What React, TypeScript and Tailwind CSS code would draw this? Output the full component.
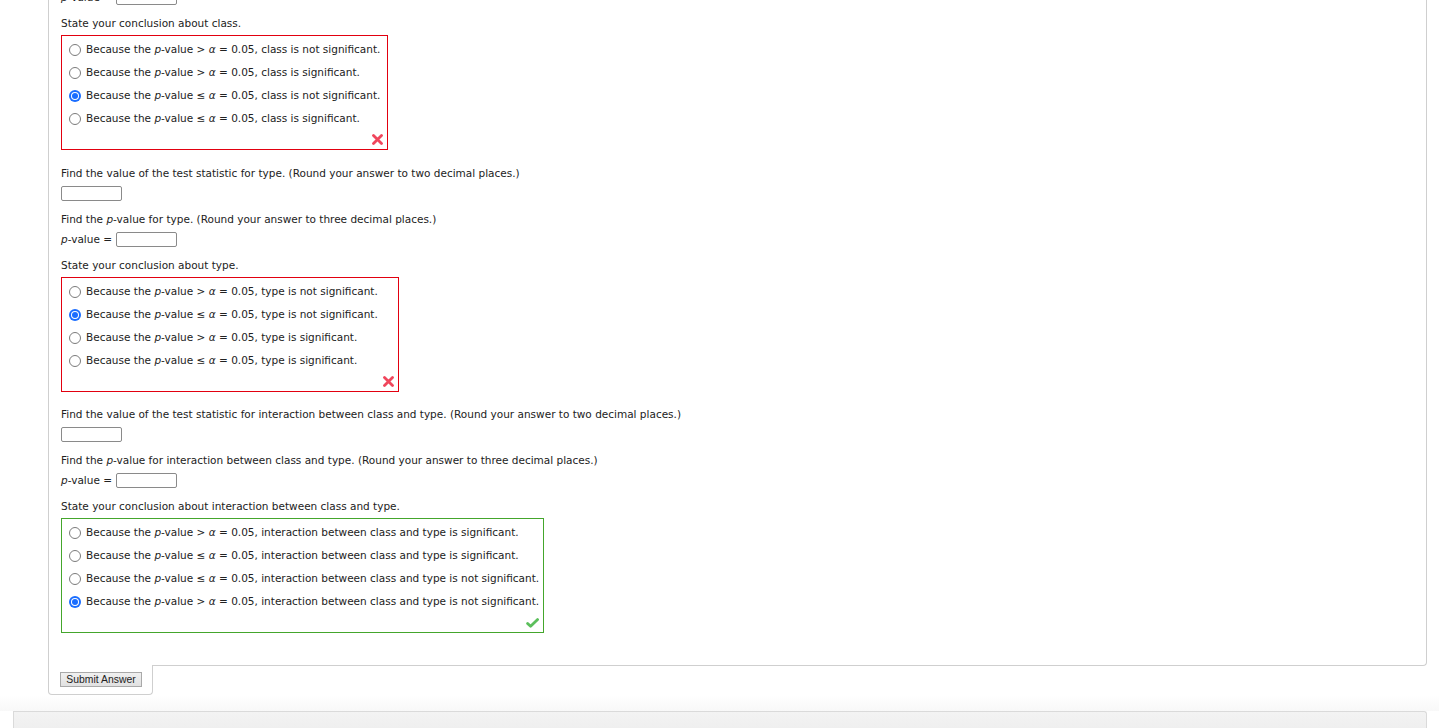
import type { ReactElement, ReactNode } from "react";

const FONT = { fontFamily: '"DejaVu Sans", Verdana, sans-serif' };

type Op = ">" | "≤";

interface Choice {
  readonly op: Op;
  readonly rest: string;
  readonly checked?: boolean;
}

function TextInput({ className = "" }: { className?: string }): ReactElement {
  return (
    <input
      type="text"
      aria-label="answer"
      className={`block w-[61px] h-[15px] border border-[#8a8a8a] rounded-[2px] bg-white ${className}`}
    />
  );
}

function PValueRow({ className = "" }: { className?: string }): ReactElement {
  return (
    <div className={`flex items-center h-[15px] ${className}`}>
      <span>
        <i>p</i>-value =
      </span>
      <TextInput className="ml-[4px]" />
    </div>
  );
}

function RedX(): ReactElement {
  return (
    <svg width="11" height="11" viewBox="0 0 11 11" aria-hidden="true">
      <path d="M1.5 1.5 L9.5 9.5 M9.5 1.5 L1.5 9.5" stroke="#f0465c" strokeWidth="2.8" strokeLinecap="round" />
    </svg>
  );
}

function GreenCheck(): ReactElement {
  return (
    <svg width="13" height="10" viewBox="0 0 13 10" aria-hidden="true">
      <path d="M1.6 5.4 L4.6 8.3 L11.6 1.6" stroke="#5cbf5c" strokeWidth="2.8" fill="none" strokeLinecap="round" strokeLinejoin="round" />
    </svg>
  );
}

function Radio({ name, checked }: { name: string; checked?: boolean }): ReactElement {
  if (checked) {
    return (
      <span className="flex items-center justify-center w-[12px] h-[12px] shrink-0 rounded-full bg-[#1a6dff]">
        <input type="radio" name={name} defaultChecked className="sr-only" />
        <span className="flex items-center justify-center w-[8px] h-[8px] rounded-full bg-white">
          <span className="w-[6px] h-[6px] rounded-full bg-[#1a6dff]" />
        </span>
      </span>
    );
  }
  return (
    <span className="block w-[12px] h-[12px] shrink-0 rounded-full border border-[#7b7b7b] bg-white">
      <input type="radio" name={name} className="sr-only" />
    </span>
  );
}

function ChoiceBox({
  name,
  choices,
  correct,
  width,
}: {
  name: string;
  choices: readonly Choice[];
  correct: boolean;
  width: string;
}): ReactElement {
  return (
    <div
      className={`${width} border pl-[7px] pr-[4px] pt-[2px] mt-[5px] ${
        correct ? "border-[#44a62c]" : "border-[#e2000f]"
      }`}
    >
      {choices.map((c, i) => (
        <label key={i} className="flex items-center h-[23px] whitespace-nowrap">
          <Radio name={name} checked={c.checked} />
          <span className="ml-[5px]">
            Because the <i>p</i>-value {c.op} <i>α</i> = 0.05, {c.rest}
          </span>
        </label>
      ))}
      <div className="flex justify-end items-center h-[19px]">
        {correct ? <GreenCheck /> : <RedX />}
      </div>
    </div>
  );
}

function Line({ children, className = "" }: { children: ReactNode; className?: string }): ReactElement {
  return <p className={`leading-[14px] ${className}`}>{children}</p>;
}

function Block({
  factor,
  name,
  choices,
  correct,
  width,
  className = "",
}: {
  factor: string;
  name: string;
  choices: readonly Choice[];
  correct: boolean;
  width: string;
  className?: string;
}): ReactElement {
  return (
    <div className={className}>
      <Line>
        Find the value of the test statistic for {factor}. (Round your answer to two decimal places.)
      </Line>
      <TextInput className="mt-[6px]" />
      <Line className="mt-[11px]">
        Find the <i>p</i>-value for {factor}. (Round your answer to three decimal places.)
      </Line>
      <PValueRow className="mt-[6px]" />
      <Line className="mt-[11px]">State your conclusion about {factor}.</Line>
      <ChoiceBox name={name} choices={choices} correct={correct} width={width} />
    </div>
  );
}

const classChoices: Choice[] = [
  { op: ">", rest: "class is not significant." },
  { op: ">", rest: "class is significant." },
  { op: "≤", rest: "class is not significant.", checked: true },
  { op: "≤", rest: "class is significant." },
];

const typeChoices: Choice[] = [
  { op: ">", rest: "type is not significant." },
  { op: "≤", rest: "type is not significant.", checked: true },
  { op: ">", rest: "type is significant." },
  { op: "≤", rest: "type is significant." },
];

const interactionChoices: Choice[] = [
  { op: ">", rest: "interaction between class and type is significant." },
  { op: "≤", rest: "interaction between class and type is significant." },
  { op: "≤", rest: "interaction between class and type is not significant." },
  { op: ">", rest: "interaction between class and type is not significant.", checked: true },
];

export default function App(): ReactElement {
  return (
    <div className="w-[1439px] h-[728px] overflow-hidden bg-white text-[#222] text-[10.5px]" style={FONT}>
      <div className="ml-[48px] mr-[12px]">
        {/* question panel */}
        <div className="border-x border-b border-[#cfcfcf] rounded-br-[4px] pl-[12px] pb-[32px]">
          <PValueRow className="-mt-[10px]" />
          <Line className="mt-[11px]">State your conclusion about class.</Line>
          <ChoiceBox name="class" choices={classChoices} correct={false} width="w-[327px]" />
          <Block
            className="mt-[16px]"
            factor="type"
            name="type"
            choices={typeChoices}
            correct={false}
            width="w-[338px]"
          />
          <Block
            className="mt-[15px]"
            factor="interaction between class and type"
            name="interaction"
            choices={interactionChoices}
            correct
            width="w-[483px]"
          />
        </div>
        {/* submit tab */}
        <div className="relative -mt-px w-[105px] bg-white border-x border-b border-[#cfcfcf] rounded-b-[4px] pl-[11px] pt-[7px] pb-[7px]">
          <button
            type="button"
            className="block w-[82px] h-[15px] border border-[#a9a9a9] bg-gradient-to-b from-[#f0f0f0] to-[#e1e1e1] text-[10.4px] leading-[13px] text-[#222]"
            style={{ fontFamily: '"Liberation Sans", Arial, sans-serif' }}
          >
            Submit Answer
          </button>
        </div>
      </div>
      {/* footer strip */}
      <div className="h-[16px] bg-gradient-to-b from-white to-[#f8f8f8]" />
      <div className="ml-[13px] mr-[12px] h-[30px] border-t border-x border-[#dadada] rounded-tr-[3px] bg-gradient-to-b from-[#f3f3f3] to-[#ececec]" />
    </div>
  );
}
